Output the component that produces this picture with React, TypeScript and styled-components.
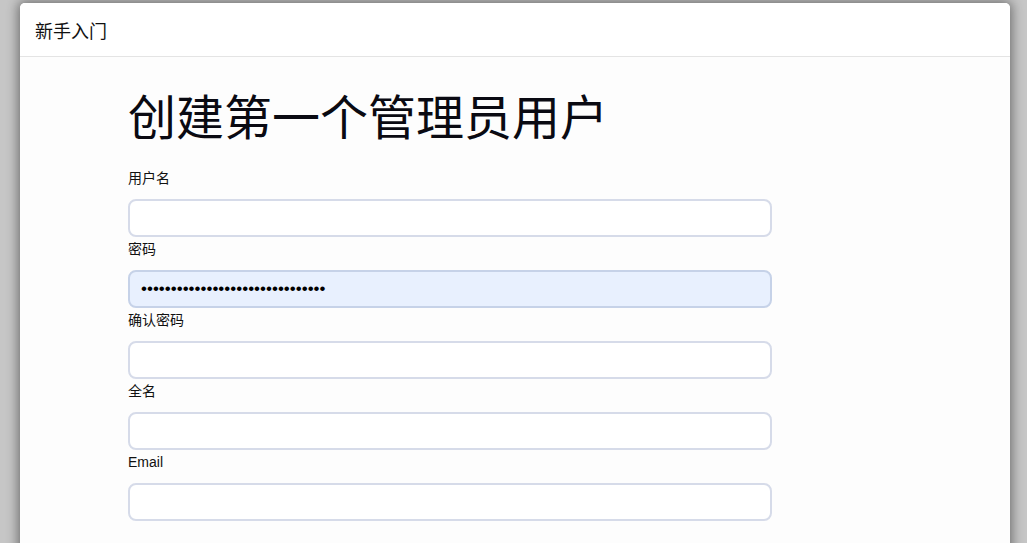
import React from "react";
import styled, { createGlobalStyle } from "styled-components";

const Global = createGlobalStyle`
  html, body { margin: 0; padding: 0; }
  body {
    background: #c6c6c6;
    font-family: "Liberation Sans", "Noto Sans CJK SC", sans-serif;
    overflow: hidden;
  }
`;

const Page = styled.div`
  height: 543px;
  padding: 3px 17px 0 20px;
  box-sizing: border-box;
  overflow: hidden;
`;

const Card = styled.div`
  width: 990px;
  height: 600px;
  background: #fdfdfd;
  border-radius: 5px 5px 0 0;
  box-shadow: 0 0 12px 2px rgba(0, 0, 0, 0.45);
  overflow: hidden;
`;

const Header = styled.div`
  height: 54px;
  box-sizing: border-box;
  display: flex;
  align-items: center;
  padding-left: 15px;
  background: #ffffff;
  border-bottom: 1px solid #e4e4e4;
  font-size: 18px;
  color: #111;
`;

const Body = styled.div`
  padding: 30px 0 0 108px;
`;

const Title = styled.h1`
  margin: 0 0 15px 0;
  font-size: 48px;
  font-weight: normal;
  line-height: 64px;
  color: #0a0a12;
`;

const Field = styled.div`
  display: flex;
  flex-direction: column;
`;

const Label = styled.label`
  display: block;
  font-size: 14px;
  line-height: 20px;
  margin: 2px 0 11px 0;
  color: #111;
`;

const Input = styled.input<{ $filled?: boolean }>`
  box-sizing: border-box;
  width: 644px;
  height: 38px;
  border: 2px solid ${(p) => (p.$filled ? "#c6d2e8" : "#d6dbe9")};
  border-radius: 8px;
  background: ${(p) => (p.$filled ? "#e8f0fe" : "#ffffff")};
  padding: 0 11px;
  font-family: "Liberation Sans", sans-serif;
  font-size: 17px;
  color: #000;
  outline: none;
`;

const fields: { label: string; type: string; value?: string }[] = [
  { label: "用户名", type: "text" },
  { label: "密码", type: "password", value: "x".repeat(31) },
  { label: "确认密码", type: "password" },
  { label: "全名", type: "text" },
  { label: "Email", type: "email" },
];

export default function App() {
  return (
    <>
      <Global />
      <Page>
        <Card>
          <Header>新手入门</Header>
          <Body>
            <Title>创建第一个管理员用户</Title>
            {fields.map((f, i) => (
              <Field key={i}>
                <Label>{f.label}</Label>
                <Input
                  type={f.type}
                  readOnly
                  value={f.value ?? ""}
                  $filled={!!f.value}
                />
              </Field>
            ))}
          </Body>
        </Card>
      </Page>
    </>
  );
}
